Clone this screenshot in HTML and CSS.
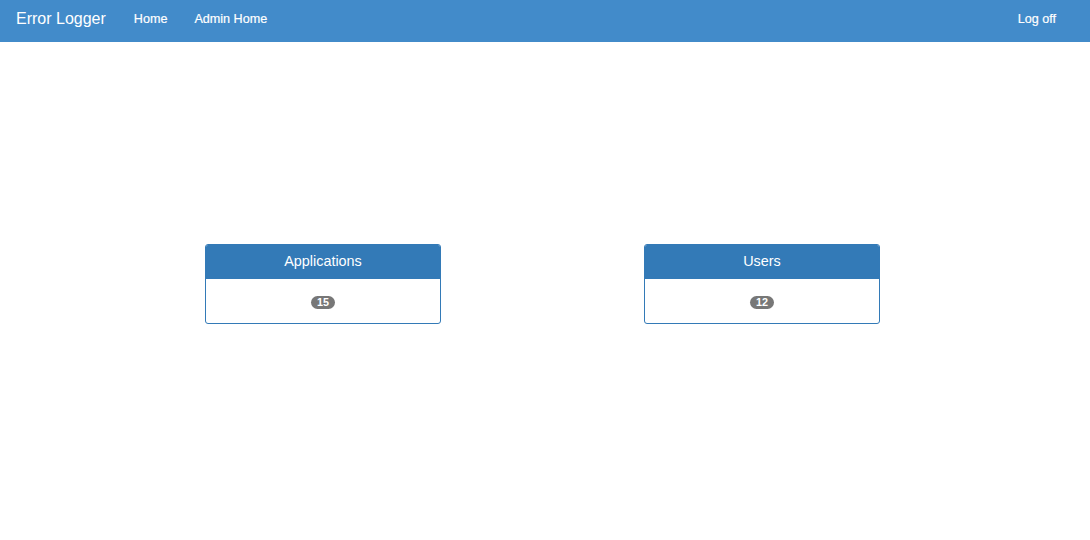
FILE: index.html
```html
<!DOCTYPE html>
<html>
<head>
<meta charset="utf-8">
<link rel="stylesheet" href="styles.css">
</head>
<body>
<nav class="navbar">
  <a class="brand" href="#">Error Logger</a>
  <ul class="nav">
    <li><a href="#">Home</a></li>
    <li><a href="#">Admin Home</a></li>
  </ul>
  <ul class="nav nav-right">
    <li><a href="#">Log off</a></li>
  </ul>
</nav>
<main class="dash">
  <section class="panel">
    <div class="panel-heading">Applications</div>
    <div class="panel-body"><span class="badge">15</span></div>
  </section>
  <section class="panel">
    <div class="panel-heading">Users</div>
    <div class="panel-body"><span class="badge">12</span></div>
  </section>
</main>
</body>
</html>
```

FILE: styles.css
```css
html, body {
  margin: 0;
  padding: 0;
  background: #fff;
  font-family: "Liberation Sans", Arial, sans-serif;
}
a { text-decoration: none; }

.navbar {
  display: flex;
  align-items: center;
  height: 42px;
  background: #428bca;
  box-sizing: border-box;
}
.brand {
  color: #fff;
  font-size: 16px;
  padding-left: 16px;
  margin-right: 28px;
  line-height: 42px;
  position: relative;
  top: -2px;
}
.nav {
  list-style: none;
  display: flex;
  gap: 27px;
  margin: 0;
  padding: 0;
}
.nav a {
  color: #fff;
  font-size: 12.6px;
  line-height: 42px;
  position: relative;
  top: -2px;
  -webkit-text-stroke: 0.2px #fff;
}
.nav-right {
  margin-left: auto;
  margin-right: 34px;
}

.dash {
  display: flex;
  gap: 203px;
  margin: 202px 0 0 205px;
}
.panel {
  width: 236px;
  border: 1px solid #337ab7;
  border-radius: 3px;
  box-sizing: border-box;
  overflow: hidden;
}
.panel-heading {
  background: #337ab7;
  color: #fff;
  font-size: 14.4px;
  height: 34px;
  line-height: 33px;
  text-align: center;
}
.panel-body {
  height: 44px;
  display: flex;
  align-items: center;
  justify-content: center;
  padding-top: 3px;
  box-sizing: border-box;
}
.badge {
  display: inline-block;
  background: #777;
  color: #fff;
  font-size: 10.8px;
  font-weight: bold;
  line-height: 13px;
  height: 13px;
  min-width: 24px;
  box-sizing: border-box;
  padding: 0 6px;
  border-radius: 7px;
  text-align: center;
}
```
